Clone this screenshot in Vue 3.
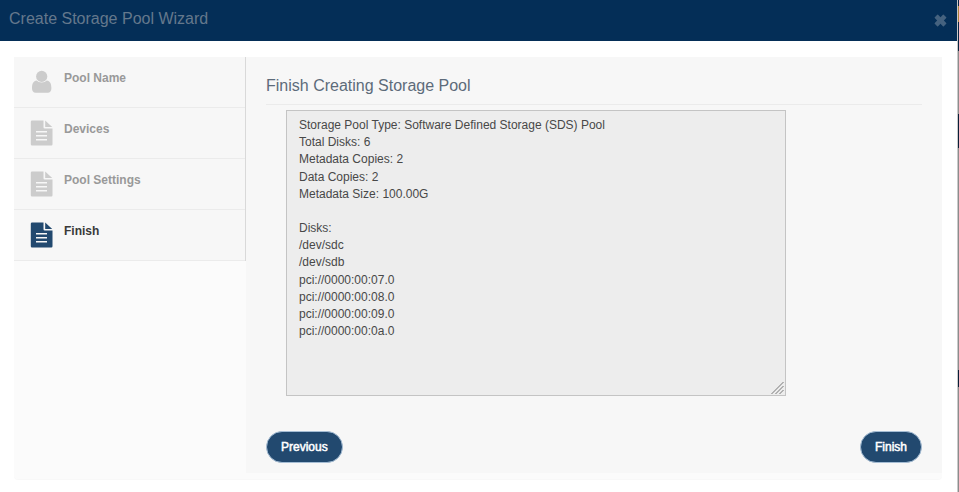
<template>
  <div class="page">
    <div class="modal">
      <header class="modal-header">
        <h4 class="modal-title">Create Storage Pool Wizard</h4>
        <button class="close" aria-label="Close">
          <svg viewBox="0 0 12 12" width="13" height="13">
            <path d="M3 0.6Q3.4 0.3 3.8 0.7L6 2.9L8.2 0.7Q8.6 0.3 9 0.6L11.3 2.9Q11.7 3.4 11.3 3.8L9.1 6L11.3 8.2Q11.7 8.6 11.3 9.1L9.1 11.3Q8.6 11.7 8.2 11.3L6 9.1L3.8 11.3Q3.4 11.7 2.9 11.3L0.7 9.1Q0.3 8.6 0.7 8.2L2.9 6L0.7 3.8Q0.3 3.4 0.7 2.9Z" />
          </svg>
        </button>
      </header>

      <div class="wizard">
        <!-- steps -->
        <ul class="steps">
          <li
            v-for="step in steps"
            :key="step.title"
            class="step"
            :class="{ active: step.title === current }"
          >
            <svg v-if="step.icon === 'user'" class="step-icon" viewBox="0 -1 22 26" width="22" height="26">
              <path d="M5.6 10.6C2.4 10.9 1 13.8 1 18.2C1 21 2.4 22.7 4.6 22.7H16.8C19 22.7 20.4 21 20.4 18.2C20.4 13.8 19 10.9 15.8 10.6C14.4 11.9 12.8 12.5 10.7 12.5S7 11.9 5.6 10.6Z" />
              <circle cx="10.7" cy="6.4" r="5.6" />
            </svg>
            <svg v-else class="step-icon" viewBox="0.2 0 22 26" width="22" height="26">
              <path
                fill-rule="evenodd"
                d="M1.3 0.4H12.7V7.2Q12.7 8.5 14 8.5H21.7V24.2Q21.7 25.4 20.5 25.4H1.2Q0 25.4 0 24.2V1.7Q0 0.4 1.3 0.4ZM5.2 11V12.6H16.2V11ZM5.2 15V16.6H16.2V15ZM5.2 18.9V20.5H16.2V18.9Z"
              />
              <path d="M14.4 0.6L21.4 7H14.4Z" />
            </svg>
            <span class="step-title">{{ step.title }}</span>
          </li>
        </ul>

        <!-- content -->
        <section class="content">
          <h4 class="content-title">Finish Creating Storage Pool</h4>
          <div class="summary-box">
            <textarea class="summary" readonly :value="summary"></textarea>
            <svg class="grip" viewBox="0 0 14 14" width="14" height="14">
              <path d="M0.5 13L12.5 1M4.5 13L12.5 5M8.5 13L12.5 9" />
            </svg>
          </div>
          <div class="actions">
            <button class="btn">Previous</button>
            <button class="btn">Finish</button>
          </div>
        </section>
      </div>
    </div>

    <!-- page behind the modal -->
    <div class="backdrop">
      <span class="mark"></span>
      <span class="block"></span>
      <span class="block second"></span>
    </div>
  </div>
</template>

<script setup>
import { ref } from 'vue'

const current = ref('Finish')

const steps = [
  { title: 'Pool Name', icon: 'user' },
  { title: 'Devices', icon: 'file' },
  { title: 'Pool Settings', icon: 'file' },
  { title: 'Finish', icon: 'file' }
]

const summary = [
  'Storage Pool Type: Software Defined Storage (SDS) Pool',
  'Total Disks: 6',
  'Metadata Copies: 2',
  'Data Copies: 2',
  'Metadata Size: 100.00G',
  '',
  'Disks:',
  '/dev/sdc',
  '/dev/sdb',
  'pci://0000:00:07.0',
  'pci://0000:00:08.0',
  'pci://0000:00:09.0',
  'pci://0000:00:0a.0'
].join('\n')
</script>

<style>
body {
  overflow: hidden;
}
</style>

<style scoped>
.page {
  display: flex;
  height: 492px;
  font-family: "Liberation Sans", Arial, sans-serif;
  font-size: 12px;
  color: #444;
  background: #fff;
}

.page * {
  box-sizing: border-box;
}

.modal {
  width: 957px;
}

/* header */
.modal-header {
  display: flex;
  align-items: center;
  justify-content: space-between;
  height: 41px;
  padding: 0 10px 4px 9px;
  background: #042e57;
}

.modal-title {
  margin: 0;
  font-size: 16px;
  font-weight: normal;
  color: #64788c;
}

.close {
  display: flex;
  margin-top: 4px;
  padding: 0;
  border: 0;
  background: none;
}

.close svg {
  fill: #45627f;
}

/* wizard */
.wizard {
  display: flex;
  align-items: flex-start;
  width: 928px;
  height: 422px;
  margin: 16px 0 0 14px;
  border-radius: 4px;
  background: #fbfbfb;
  box-shadow: 0 1px 1px rgba(0, 0, 0, 0.03);
}

.steps {
  width: 232px;
  margin: 0;
  padding: 0;
  border-right: 1px solid #d9d9d9;
  list-style: none;
}

.step {
  display: flex;
  height: 51px;
  padding: 12px 0 0 17px;
  border-bottom: 1px solid #ebebeb;
  background: #f7f7f7;
  color: #999;
  font-weight: bold;
}

.step-icon {
  flex: none;
  margin-right: 11px;
  overflow: visible;
  fill: #ccc;
}

.step-title {
  margin-top: 1px;
  line-height: 16px;
}

.step.active {
  color: #3a3a3a;
}

.step.active .step-icon {
  fill: #22496f;
}

.content {
  flex: 1;
  height: 416px;
  padding: 18px 20px 0;
  background: #f7f7f7;
}

.content-title {
  height: 30px;
  margin: 0 0 5px;
  border-bottom: 1px solid #ebebeb;
  font-size: 16px;
  font-weight: normal;
  line-height: 22px;
  color: #5d6b7a;
}

.summary-box {
  position: relative;
  width: 500px;
  height: 286px;
  margin-left: 20px;
}

.summary {
  display: block;
  width: 100%;
  height: 100%;
  margin: 0;
  padding: 6.15px 12px;
  border: 1px solid #c4c4c4;
  border-radius: 0;
  outline: none;
  resize: none;
  background: #ededed;
  color: #484848;
  font-family: inherit;
  font-size: 12px;
  line-height: 17.16px;
}

.grip {
  position: absolute;
  right: 1px;
  bottom: 1px;
  fill: none;
  stroke: #777;
}

.actions {
  display: flex;
  justify-content: space-between;
  margin-top: 35px;
}

.btn {
  height: 32px;
  padding: 0 14px;
  border: 1px solid #a5bdd4;
  border-radius: 16px;
  background: #22496f;
  color: #fff;
  font-family: inherit;
  font-size: 12px;
  -webkit-text-stroke: 0.5px #fff;
}

/* strip at the right edge */
.backdrop {
  width: 2px;
  border-left: 1px solid #c9c9c9;
  background: #8c8c8c;
}

.backdrop span {
  display: block;
}

.mark {
  height: 51px;
  border-top: 6px solid #0a2440;
  background: linear-gradient(#a9813c 16px, #0a2440 16px);
}

.block {
  height: 34px;
  margin-top: 63px;
  background: #0a1f38;
}

.block.second {
  height: 17px;
  margin-top: 222px;
}
</style>
